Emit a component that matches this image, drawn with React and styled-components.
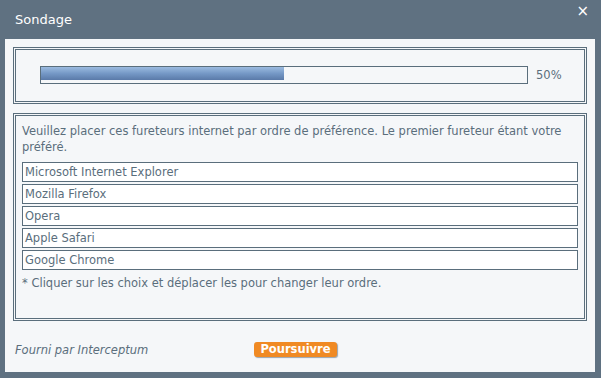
import styled, { createGlobalStyle } from "styled-components";

const Global = createGlobalStyle`
  html, body {
    margin: 0;
    padding: 0;
    background: #5f7181;
  }
  body {
    font-family: "DejaVu Sans", Verdana, sans-serif;
  }
`;

const choices = [
  "Microsoft Internet Explorer",
  "Mozilla Firefox",
  "Opera",
  "Apple Safari",
  "Google Chrome",
];

const App = () => (
  <>
    <Global />
    <Window>
      <TitleBar>
        <Title>Sondage</Title>
        <Close>×</Close>
      </TitleBar>
      <Panel>
        <DoubleBox>
          <ProgressRow>
            <Track>
              <Fill style={{ width: "50%" }} />
            </Track>
            <Percent>50%</Percent>
          </ProgressRow>
        </DoubleBox>
        <DoubleBox $tall>
          <Question>
            Veuillez placer ces fureteurs internet par ordre de préférence. Le
            premier fureteur étant votre préféré.
          </Question>
          <ChoiceList>
            {choices.map((c) => (
              <Choice key={c}>{c}</Choice>
            ))}
          </ChoiceList>
          <Hint>* Cliquer sur les choix et déplacer les pour changer leur ordre.</Hint>
        </DoubleBox>
        <Footer>
          <Credit>Fourni par Interceptum</Credit>
          <Button>Poursuivre</Button>
        </Footer>
      </Panel>
    </Window>
  </>
);

const Window = styled.div`
  width: 601px;
  height: 378px;
  background: #5f7181;
  overflow: hidden;
`;

const TitleBar = styled.div`
  height: 39px;
  display: flex;
  justify-content: space-between;
  align-items: flex-start;
  padding: 0 12px 0 15px;
  box-sizing: border-box;
`;

const Title = styled.div`
  color: #ffffff;
  font-size: 13px;
  line-height: 16px;
  margin-top: 12px;
`;

const Close = styled.div`
  color: #ffffff;
  font-size: 15px;
  line-height: 14px;
  margin-top: 4px;
`;

const Panel = styled.div`
  margin: 0 6px 0 5px;
  height: 333px;
  background: #f5f7f9;
  padding: 8px 8px 0;
  box-sizing: border-box;
  display: flex;
  flex-direction: column;
`;

const DoubleBox = styled.div`
  border: 3px double #5a6e7c;
  box-sizing: border-box;
  height: ${(p) => (p.$tall ? "208px" : "57px")};
  margin-bottom: 9px;
  padding: ${(p) => (p.$tall ? "7px 6px 0" : "0")};
`;

const ProgressRow = styled.div`
  display: flex;
  align-items: center;
  height: 100%;
  padding-left: 24px;
  padding-bottom: 2px;
  box-sizing: border-box;
`;

const Track = styled.div`
  width: 488px;
  height: 18px;
  border: 1px solid #5a6e7c;
  box-sizing: border-box;
  background: #f5f7f9;
`;

const Fill = styled.div`
  height: 13px;
  background: linear-gradient(#9bbbe0, #7598c6 50%, #5a7aa9);
`;

const Percent = styled.span`
  margin-left: 8px;
  font-size: 11.5px;
  color: #5a6e7c;
`;

const Question = styled.p`
  margin: 0 0 7px;
  font-size: 11.5px;
  line-height: 16px;
  color: #5a6e7c;
`;

const ChoiceList = styled.div`
  display: flex;
  flex-direction: column;
  gap: 2px;
`;

const Choice = styled.div`
  height: 20px;
  border: 1px solid #5a6e7c;
  box-sizing: border-box;
  background: #ffffff;
  padding-left: 2px;
  font-size: 11.5px;
  line-height: 18px;
  color: #5a6e7c;
`;

const Hint = styled.div`
  margin-top: 6px;
  font-size: 11.5px;
  line-height: 14px;
  color: #5a6e7c;
`;

const Footer = styled.div`
  display: flex;
  align-items: center;
  padding: 12px 0 0 2px;
`;

const Credit = styled.span`
  font-size: 11.5px;
  font-style: italic;
  color: #5a6e7c;
  width: 239px;
`;

const Button = styled.button`
  width: 83px;
  height: 15px;
  padding: 0;
  border: none;
  border-radius: 3px;
  background: #f08a24;
  color: #ffffff;
  font-family: inherit;
  font-size: 11.5px;
  font-weight: bold;
  line-height: 15px;
  box-shadow: 1px 1px 1px #9aa4ad;
`;

export default App;
